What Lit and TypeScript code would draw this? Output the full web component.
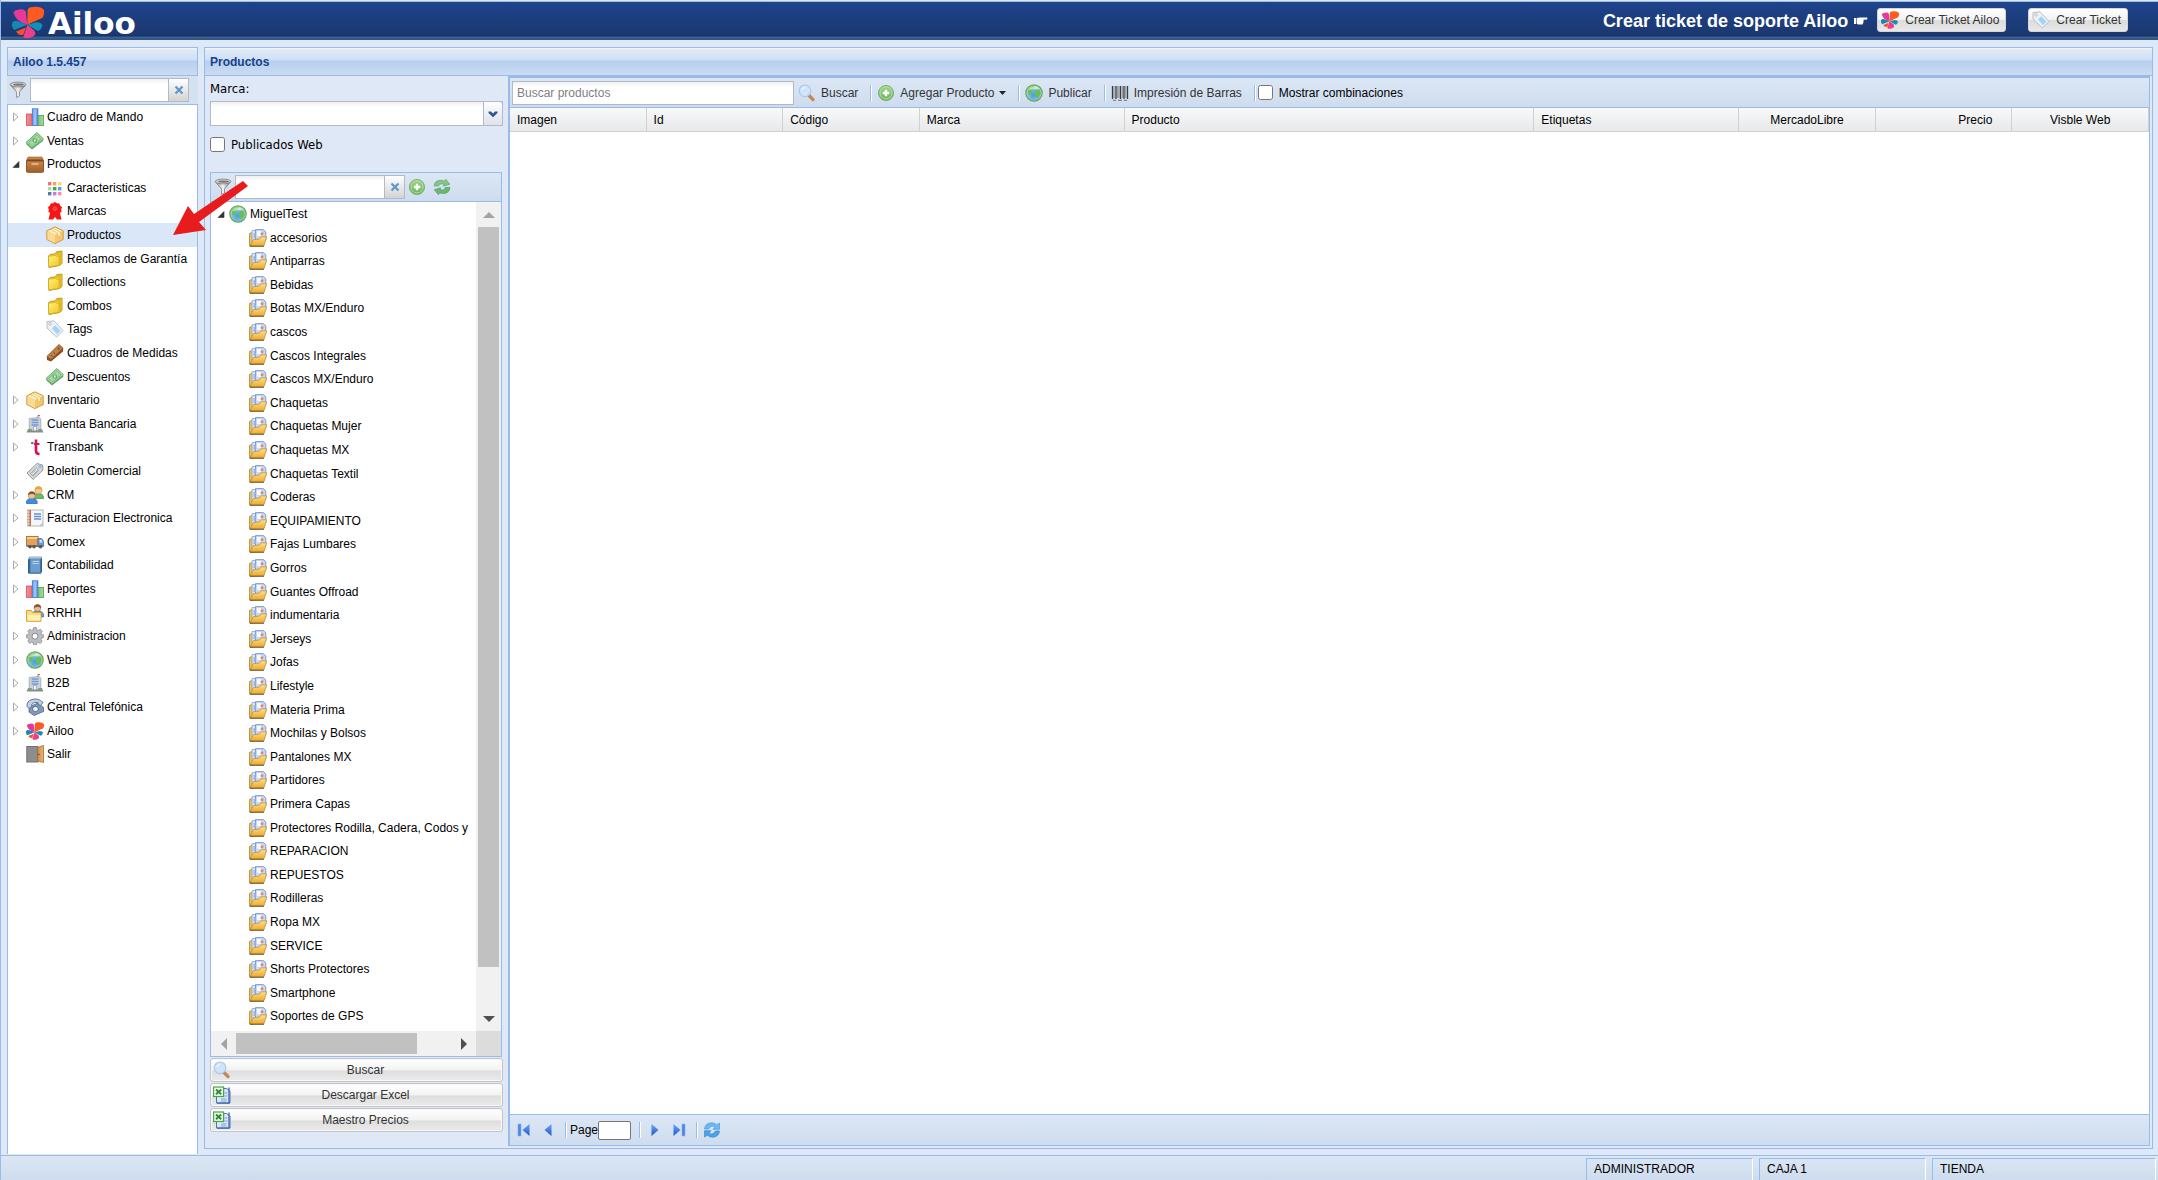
import { LitElement, html, svg, css, nothing } from "lit";
import { customElement, state } from "lit/decorators.js";
import { classMap } from "lit/directives/class-map.js";

const pinwheel = svg`
  <path d="M8.600 10.200Q2 8.500.8 3.200 2 1.500 4.300 1.700 6.500 1 7.800 2.800Z" fill="#e8389a"/>
  <path d="M8.600 10.200 8.800 2Q9 .4 12 .3 15.700-.4 18 1.900 18.400 4 17.200 6.300Z" fill="#ff5a1f"/>
  <path d="M8.600 10.200 13.700 8.900Q16.500 9 17 10.500 16.800 13 14.500 13.800Z" fill="#1390b8"/>
  <path d="M8.600 10.200 12.300 13.300Q13.800 15 12.500 16.500 9.800 18.600 6.300 17.300Z" fill="#ee3d8b"/>
  <path d="M7.800 11.800 6.300 16Q3.500 16.500 2.300 14Z" fill="#fb4f2a"/>
  <path d="M8.600 10.200 1.200 13.200Q-.6 11 .2 9 1 7.800 2.600 8Z" fill="#1587b5"/>`;

const bars = svg`
  <rect x=".4" y="6" width="5.700" height="11.500" fill="url(#gRedBar)" stroke="#dd5257" stroke-width=".8"/>
  <rect x="6.300" y=".8" width="5.600" height="16.700" fill="url(#gBlueBar)" stroke="#3d76d2" stroke-width=".8"/>
  <rect x="12.100" y="7.500" width="5.500" height="10" fill="url(#gGreenBar)" stroke="#4fa055" stroke-width=".8"/>`;

const money = svg`
  <path d="M0 12 11 2 17.500 8.500 6 17.500Z" fill="#5ea268"/>
  <path d="M0 10.500 11 .5 17.500 7 6 16Z" fill="#a9d8a4" stroke="#64ab69"/>
  <path d="M2.500 10.500 11 2.800 15 7 6.200 14Z" fill="none" stroke="#7dbb7e"/>
  <circle cx="8.800" cy="8.500" r="2.300" fill="#5fae66"/><path d="M8 8.500h1.600M8.800 7v3" stroke="#dff3da"/>`;

const box = svg`
  <path d="M.8 4.800 9 .8 17.200 4.800V13.500L9 17.600.8 13.500Z" fill="#f5c768" stroke="#d39a3b"/>
  <path d="M1.500 5.200 9 9 16.500 5.200 9 1.500Z" fill="#fdecb9"/>
  <path d="M9 9V17L1.500 13.300V5.300Z" fill="#f9db95"/>
  <path d="M4.800 3.600 12 7.300V11L14.300 9.900V6.200L7 2.500Z" fill="#fff7dc" stroke="#dcae58" stroke-width=".6"/>`;

const building = svg`
  <path d="M3.200 16.500V3.500L13 2.500 14.800 4V16.500Z" fill="#cfd3d8" stroke="#a0a5ab" stroke-width=".8"/>
  <path d="M5.500 5h7M5.500 7.500h7M5.500 10h7" stroke="#6d9cda" stroke-width="1.300"/>
  <path d="M11.700 2.500V.5" stroke="#888" stroke-width=".7"/><path d="M12 0h1.700v1.300H12z" fill="#d33"/>
  <path d="M7.500 11.500h3v5h-3z" fill="#f2f6fa" stroke="#778" stroke-width=".5"/>
  <path d="M1.300 15.500h15.400l.6 2H.7z" fill="#868c93"/><path d="M1.800 14h4v2h-4zM12.200 14h4v2h-4z" fill="#79a276"/>`;

const globe = svg`
  <circle cx="9" cy="9" r="8.200" fill="url(#gGlobe)" stroke="#6aa65f" stroke-width="1.200"/>
  <path d="M3.500 5Q6 1.800 9.500 2.500L8.500 5 6.500 7 7 9.500 4.500 11Q2.200 9 3.500 5ZM10.500 6.500 14.500 5.500Q16.500 9 14.500 12L12 14.500 10.500 11.500 9 9.500ZM5.500 12.500 8 13.500 7.500 15.500Z" fill="#6cbd59"/>
  <path d="M3 6Q8 0 14.500 4.500Q8.500 5 3 6Z" fill="#fff" opacity=".55"/>`;

const tag = svg`
  <path d="M1 1.500 8 .8 17 10.500 10.500 17 1 8Z" fill="#eef1f4" stroke="#b9bfc6"/>
  <path d="M6 8.500 9.200 5.300 14.500 10.800 11 14.200Z" fill="#9fd5fb"/><circle cx="4" cy="3.800" r="1.300" fill="#fff" stroke="#b9bfc6"/>`;

const folderYellow = svg`
  <path d="M2.500 6 4 4.500 9.500 3.800 10.500 1.800 16 1V13.500L13.500 15.500 3 17.500Z" fill="#f5d33c" stroke="#b98f12" stroke-width=".9"/>
  <path d="M10.500 2.300 15.500 1.500V13L13.500 14.500V4.500L10 5Z" fill="#e3b81e"/>
  <path d="M2.500 6.300 9.500 5.300 10.500 6.300 13.200 5.900V15.300L2.800 17Z" fill="url(#gYellow)" stroke="#c99d14" stroke-width=".6"/>`;

const icons: Record<string, unknown> = {
  bars, money, box, building, globe, tag, pinwheel,
  folder: folderYellow,
  chest: svg`
    <path d="M2 2 16 2 18 6.500H0Z" fill="#c98548" stroke="#99602e" stroke-width=".6"/><path d="M1.200 4.500h15.600L18 7H0Z" fill="#6f421d"/>
    <rect x=".5" y="6" width="17" height="11.300" rx="1" fill="url(#gBrown)" stroke="#8d5323"/>
    <path d="M5.500 8.200h7v1.600h-7z" fill="#e8bd8c"/>`,
  dots: svg`
    <path d="M2 3h3.400v3.400H2z" fill="#fa6e6e"/><path d="M7 3h3.400v3.400H7z" fill="#f7a15e"/><path d="M12 3h3.400v3.400H12z" fill="#f5dc6a"/>
    <path d="M2 8h3.400v3.400H2z" fill="#a7dfa2"/><path d="M7 8h3.400v3.400H7z" fill="#33b04a"/><path d="M12 8h3.400v3.400H12z" fill="#4fa4e8"/>
    <path d="M2 13h3.400v3.400H2z" fill="#5676b8"/><path d="M7 13h3.400v3.400H7z" fill="#c47bdc"/><path d="M12 13h3.400v3.400H12z" fill="#f48bb0"/>`,
  ribbon: svg`
    <path d="M4.500 9 2.500 17.500H7L9 15 11 17.500H15.500L13.500 9Z" fill="#f01818"/>
    <path d="m9 0 2 1.300 2.400.1.800 2.300 1.800 1.600-.8 2.200.4 2.400-2.200 1.200L12 13.300 9 12.400 6 13.300 4.600 11.100 2.400 9.900l.4-2.400L2 5.300l1.800-1.600.8-2.300L7 1.300Z" fill="#fb1414"/>
    <circle cx="9" cy="6.800" r="3.200" fill="#ff3c3c" stroke="#c40f0f" stroke-width=".7"/>`,
  ruler: svg`
    <path d="M.8 13.500 13 .8 17.300 4.500 17 7.500 5 17.500 1 16Z" fill="#8a4f24"/>
    <path d="M.8 12.500 13 .5 17 4.200 5 15.500Z" fill="#bd8046" stroke="#8d5226" stroke-width=".8"/>
    <circle cx="12.800" cy="4.500" r="1" fill="#7d4317"/><path d="m5 11 1.500 1.500M7.500 8.500 9 10" stroke="#7d4317"/>`,
  transbank: svg`
    <path d="M10 1.500v11.500q0 3 3.500 3" fill="none" stroke="#dc1049" stroke-width="2.600"/><path d="M8 6H13.500" stroke="#dc1049" stroke-width="2"/>
    <circle cx="6.300" cy="5" r="1.300" fill="#2f7fc0"/>`,
  ticket: svg`
    <path d="M1 11 11 1.500 16.500 3 17 8 7 17.500Z" fill="#d5d7d9" stroke="#96999c"/>
    <path d="M4.500 11.500 10.500 6 12.500 8.200 7 14Z" fill="#eef0f1" stroke="#8d9093" stroke-width=".8"/>
    <path d="m6 11.500 4-3.700M7.200 12.700 11.500 8.500" stroke="#888b8e" stroke-width=".7"/><circle cx="14" cy="4.500" r="1.600" fill="#8dbce8"/>`,
  people: svg`
    <path d="M8 11Q8 7.500 12.500 7.500T17.500 11V12.500H8Z" fill="#6fb96d" stroke="#3e8a42" stroke-width=".7"/>
    <circle cx="12.500" cy="4.200" r="3.600" fill="#f3c893" stroke="#c98f4f" stroke-width=".6"/><path d="M8.800 4Q9 .4 12.500.4T16.200 4Q12 1.800 8.800 4Z" fill="#e2ab39"/>
    <path d="M.5 16Q.5 12.500 5.800 12.500T11.200 16V17.500H.5Z" fill="#3f8de0" stroke="#2264b4" stroke-width=".7"/>
    <circle cx="5.800" cy="9.200" r="3.600" fill="#f1c193" stroke="#b67c44" stroke-width=".6"/><path d="M2 9.200Q2.200 5.400 5.800 5.400T9.600 9.200Q6 7 2 9.200Z" fill="#8b5328"/>`,
  notebook: svg`
    <rect x="1.500" y="1" width="15.500" height="16" fill="#f6f7f8" stroke="#b5b8bb"/>
    <path d="M2.500 1H5v16H2.500z" fill="#c7724c"/><path d="M1 3h3M1 6h3M1 9h3M1 12h3M1 15h3" stroke="#f0d8cc"/>
    <path d="M8 5h7M8 7.500h7M8 10h7" stroke="#5d94d8" stroke-width="1.300"/><path d="m13 17 4-4v4Z" fill="#c3c6c9"/>`,
  truck: svg`
    <rect x=".5" y="3.500" width="11.500" height="9" fill="#e2a25b" stroke="#b57636"/><path d="M1 4h10.500v2H1z" fill="#f4cd9b"/>
    <path d="M12 5.500h3.500Q17.500 7 17.500 9.500v3.500H12Z" fill="#6f97d3" stroke="#456ba8" stroke-width=".8"/><path d="M13.500 6.800h2l1 2.700h-3z" fill="#d7e7fa"/>
    <path d="M.5 12.500h17V14H.5z" fill="#70757b"/><circle cx="4" cy="13.700" r="1.800" fill="#555"/><circle cx="8" cy="13.700" r="1.800" fill="#555"/><circle cx="14.500" cy="13.700" r="1.800" fill="#555"/>`,
  book: svg`
    <path d="M2 3.500 3.500.8H16V15.500L14.500 17.500H2Z" fill="#2f5f8e"/><rect x="3.800" y="2.600" width="11" height="14.400" fill="#6d9dcb" stroke="#376a9c"/>
    <path d="M6.500 5.500h6.500M6.500 7.500h6.500" stroke="#b8d4ec"/><path d="M2.500 3.500 4 1.300h11.500v1.200H4Z" fill="#dfe9f2"/>`,
  rrhh: svg`
    <path d="M6.500 10Q7 6.500 11.500 6.500T17.500 10V13H6.500Z" fill="#5c9de2" stroke="#3473ba" stroke-width=".7"/>
    <circle cx="11.500" cy="4" r="3.300" fill="#efbd8e" stroke="#a76b3c" stroke-width=".6"/><path d="M7.900 4Q8 .3 11.500.3T15.200 4Q12 2 7.900 4Z" fill="#8f572b"/>
    <path d="M.6 6.500H5.500L6.500 8.500H15V17.300H.6Z" fill="#f9dd7c" stroke="#d79e35"/><path d="M1.500 11H14.500V16.500H1.500Z" fill="#fdf0b3"/>`,
  gear: svg`
    <path d="m7.600.6h2.800l.4 2.200 1.600.7L14.300 2.300l1.900 2-1.200 1.800.6 1.500 2 .4v2.600l-2 .5-.7 1.600 1.200 1.800-2 1.900-1.800-1.200-1.500.6-.4 2H7.600l-.5-2-1.600-.6-1.700 1.200-2-2 1.200-1.700-.7-1.600-1.900-.5V7.900l1.900-.3.800-1.700L1.900 4.200l1.900-2 1.800 1.200 1.600-.6Z" fill="#bcbfc2" stroke="#8b8e91" stroke-width=".8"/>
    <circle cx="9" cy="9.200" r="3" fill="#fff" stroke="#85888b"/>`,
  phone: svg`
    <path d="M3 9 12 5 17.500 9.500V13.500L8 17.500 3 14Z" fill="#8299b8" stroke="#4e6686" stroke-width=".8"/>
    <path d="M1 8.500Q.5 3 6 1.500 12-.5 17 4.500L14.500 7.500 12 6.200 12 4.500Q8 3.500 5.500 6.500L6 8.500 3 10.500Z" fill="#c2d0e1" stroke="#516a8b" stroke-width=".9"/>
    <ellipse cx="9.500" cy="11" rx="3" ry="2.600" fill="#f0f4f9" stroke="#47617f" stroke-width=".9"/>`,
  door: svg`
    <rect x=".8" y="1.500" width="11" height="15.500" fill="#8b8d90" stroke="#6e7073"/><path d="M11.500 2.500 17.500.5V17.500L11.500 16Z" fill="url(#gDoor)" stroke="#a8682d" stroke-width=".8"/>
    <circle cx="12.800" cy="9.500" r=".8" fill="#6b3c12"/>`,
  funnel: svg`
    <path d="M1.500 4 7.500 11V16.500L10.500 15V11L16.500 4Z" fill="url(#gGrey)" stroke="#666" stroke-width=".6"/>
    <ellipse cx="9" cy="3.500" rx="7.800" ry="2.400" fill="#d6d6d6" stroke="#6c6c6c" stroke-width=".7"/><ellipse cx="9.500" cy="3.600" rx="5.500" ry="1.200" fill="#777"/>`,
  category: svg`
    <path d="M.5 4.500 2.500 3.500 4 5V17H.5Z" fill="#efc152" stroke="#a47724" stroke-width=".7"/>
    <path d="M3 1.500H9V13H3Z" fill="#dbe6f8" stroke="#8fa5cf" stroke-width=".8"/>
    <path d="M6.500.6H14.500L16.800 3V11H6.500Z" fill="#c7d8f5" stroke="#6c8ac2" stroke-width=".8"/>
    <path d="M8 2h4v5H8z" fill="#f4f8ff"/><path d="M4.500 4h2v5h-2z" fill="#9fb9e6"/><circle cx="13" cy="4.800" r="1.500" fill="#e58760"/>
    <path d="M.8 17 4.500 10.500 10.500 10 12 7.800H17.700L15 16.700Z" fill="url(#gYellow2)" stroke="#a87822" stroke-width=".6"/><path d="M1 17.300H15" stroke="#5d4a24" stroke-width=".9"/>`,
  search: svg`
    <path d="m10.500 11 4.500 4.500" stroke="#c18b55" stroke-width="3.400" stroke-linecap="round"/>
    <circle cx="7" cy="6.800" r="5.800" fill="#cfe4fa" stroke="#a9c8ea" stroke-width="1.200"/><path d="M3.500 6.500Q4 3 8 3 5.500 4 3.500 6.500Z" fill="#fff"/>`,
  add: svg`
    <circle cx="9" cy="9" r="7.600" fill="url(#gAdd)" stroke="#6dab5d" stroke-width=".8"/><circle cx="9" cy="9" r="6" fill="none" stroke="#b4dea6"/>
    <path d="M9 5.700v6.600M5.700 9h6.600" stroke="#fff" stroke-width="2.400"/>`,
  swap: svg`
    <path d="M1 8Q1.500 2 8.500 2.300L11.500 3 13 1.300 16.800 6.300 10.500 8.200 10.800 6.300Q7 5 5.500 8Z" fill="#85c489" stroke="#58a45f" stroke-width=".6"/>
    <path d="M17 9.500Q16.500 15.700 9.500 15.500L6.500 14.800 5.500 16.800 1.200 11.700 7.500 9.800 7.200 11.700Q11 13 12.500 9.500Z" fill="#6db673" stroke="#4b9653" stroke-width=".6"/>`,
  excel: svg`
    <path d="M7 2.500H13.500L17 5V17H3.500V10H7Z" fill="#dbe7f8" stroke="#4a74b4"/><path d="M16 1.500V17.200H4" fill="none" stroke="#3d69ad" stroke-width="1.300"/>
    <path d="M8 13h5.500M8 15h5.500M11.500 7h3M11.500 10h3" stroke="#7fa3d6"/>
    <rect x=".6" y="1" width="10" height="9.500" fill="#eef8ea" stroke="#4ba34d" stroke-width="1.200"/><path d="M3 3.500 8.200 8.200M8.200 3.500 3 8.200" stroke="#2c8b31" stroke-width="1.900"/>`,
  barcode: svg`<path d="M1.500 2V15M5 2V15M9.500 2V15M13 2V15M16.500 2V15" stroke="#3c3c3c" stroke-width="1.300"/><path d="M3 2V14M6.700 2V14M8 2V14M11.300 2V14M14.800 2V14" stroke="#777" stroke-width=".8"/><path d="M2 16.300h3M7 16.300h4M13 16.300h3" stroke="#555" stroke-width=".8"/>`,
  first: svg`<path d="M3 3h3v12H3z" fill="#4b86e2" stroke="#8ab2ee" stroke-width=".6"/><path d="M14.500 3V15L7.500 9Z" fill="url(#gBlue)"/>`,
  prev: svg`<path d="M12.500 3V15L5.500 9Z" fill="url(#gBlue)"/>`,
  next: svg`<path d="M5.500 3V15L12.500 9Z" fill="url(#gBlue)"/>`,
  last: svg`<path d="M12 3h3v12h-3z" fill="#4b86e2" stroke="#8ab2ee" stroke-width=".6"/><path d="M3.500 3V15L10.500 9Z" fill="url(#gBlue)"/>`,
  refresh: svg`
    <path d="M1.500 8Q2 2 8.500 1.800 12 1.800 13.500 3.800L16.500 2V8.300H10L12 6Q8 3.500 5.500 8Z" fill="#6cb8f3" stroke="#3f93d8" stroke-width=".6"/>
    <path d="M16.500 10Q16 16 9.500 16.200 6 16.200 4.500 14.200L1.500 16V9.700H8L6 12Q10 14.500 12.500 10Z" fill="#4ba2e8" stroke="#2f84cb" stroke-width=".6"/>`,
};

const icon = (name: string) =>
  html`<svg class="icon" viewBox="0 0 18 18" aria-hidden="true">${icons[name]}</svg>`;

type Item = { icon: string; label: string; kind?: "closed" | "open" | "leaf" | "child" };

const menu: Item[] = [
  { icon: "bars", label: "Cuadro de Mando" },
  { icon: "money", label: "Ventas" },
  { icon: "chest", label: "Productos", kind: "open" },
  { icon: "dots", label: "Caracteristicas", kind: "child" },
  { icon: "ribbon", label: "Marcas", kind: "child" },
  { icon: "box", label: "Productos", kind: "child" },
  { icon: "folder", label: "Reclamos de Garantía", kind: "child" },
  { icon: "folder", label: "Collections", kind: "child" },
  { icon: "folder", label: "Combos", kind: "child" },
  { icon: "tag", label: "Tags", kind: "child" },
  { icon: "ruler", label: "Cuadros de Medidas", kind: "child" },
  { icon: "money", label: "Descuentos", kind: "child" },
  { icon: "box", label: "Inventario" },
  { icon: "building", label: "Cuenta Bancaria" },
  { icon: "transbank", label: "Transbank" },
  { icon: "ticket", label: "Boletin Comercial", kind: "leaf" },
  { icon: "people", label: "CRM" },
  { icon: "notebook", label: "Facturacion Electronica" },
  { icon: "truck", label: "Comex" },
  { icon: "book", label: "Contabilidad" },
  { icon: "bars", label: "Reportes" },
  { icon: "rrhh", label: "RRHH", kind: "leaf" },
  { icon: "gear", label: "Administracion" },
  { icon: "globe", label: "Web" },
  { icon: "building", label: "B2B" },
  { icon: "phone", label: "Central Telefónica" },
  { icon: "pinwheel", label: "Ailoo" },
  { icon: "door", label: "Salir", kind: "leaf" },
];

const categories = [
  "accesorios", "Antiparras", "Bebidas", "Botas MX/Enduro", "cascos", "Cascos Integrales",
  "Cascos MX/Enduro", "Chaquetas", "Chaquetas Mujer", "Chaquetas MX", "Chaquetas Textil",
  "Coderas", "EQUIPAMIENTO", "Fajas Lumbares", "Gorros", "Guantes Offroad", "indumentaria",
  "Jerseys", "Jofas", "Lifestyle", "Materia Prima", "Mochilas y Bolsos", "Pantalones MX",
  "Partidores", "Primera Capas", "Protectores Rodilla, Cadera, Codos y", "REPARACION",
  "REPUESTOS", "Rodilleras", "Ropa MX", "SERVICE", "Shorts Protectores", "Smartphone",
  "Soportes de GPS",
];

const columns: { label: string; span: number; align?: "center" | "right" }[] = [
  { label: "Imagen", span: 2 },
  { label: "Id", span: 2 },
  { label: "Código", span: 2 },
  { label: "Marca", span: 3 },
  { label: "Producto", span: 6 },
  { label: "Etiquetas", span: 3 },
  { label: "MercadoLibre", span: 2, align: "center" },
  { label: "Precio", span: 2, align: "right" },
  { label: "Visble Web", span: 2, align: "center" },
];
const totalSpan = columns.reduce((sum, c) => sum + c.span, 0);

@customElement("app-root")
export class AppRoot extends LitElement {
  @state() private selected = 5;

  static styles = css`
    :host {
      display: block;
      --line: #99bbe8;
      --bar: linear-gradient(#dce7f5, #cddcee);
      font: 12px/16px "Liberation Sans", Arial, sans-serif;
      color: #000;
    }
    * { box-sizing: border-box; }
    button, input, select { font: inherit; color: inherit; margin: 0; }
    button { background: none; border: 0; padding: 0; cursor: pointer; }
    a { color: inherit; text-decoration: none; }
    .defs { position: absolute; width: 0; height: 0; }
    .icon { display: block; width: 18px; height: 18px; flex: none; }
    .app {
      min-height: 100vh;
      display: flex;
      flex-direction: column;
      background: #dfe8f6;
      border-left: 1px solid var(--line);
      padding-top: 1px;
    }
    .top {
      height: 39px;
      flex: none;
      display: flex;
      align-items: flex-start;
      border-top: 1px solid var(--line);
      background: linear-gradient(#1e448c, #1b376f 33px, #16305f 34px, #3d6496 35px, #2c5384);
      padding: 0 30px 0 11px;
      color: #fff;
    }
    .brand { display: flex; align-items: center; gap: 4px; padding-top: 2px; flex: 1; }
    .brand .icon { width: 32px; height: 33px; }
    .word { font: bold 31px/34px "DejaVu Sans", sans-serif; padding-top: 2px; }
    .support { display: flex; align-items: center; gap: 6px; font-size: 18px; font-weight: bold; line-height: 38px; margin-right: 9px; }
    .hand { width: 14px; height: 8px; display: block; }
    .ticket {
      display: flex;
      align-items: center;
      gap: 6px;
      height: 24px;
      margin-top: 6px;
      padding: 0 6px 0 3px;
      border: 1px solid #d5d5d5;
      border-radius: 3px;
      background: linear-gradient(#fff, #f2f2f2 48%, #dcdcdc 52%, #e8e8e8);
      color: #333;
    }
    .ticket + .ticket { margin-left: 22px; }
    .body { flex: 1; display: flex; gap: 6px; padding: 7px 5px 1px 6px; }
    .title {
      margin: 0;
      height: 29px;
      padding: 1px 5px 0;
      border: 1px solid var(--line);
      background: linear-gradient(#f4f8fd, #dfeaf7 2px, #cfdff4 12px, #b6cfef 13px, #cbdcf3);
      color: #15428b;
      font-size: 12px;
      font-weight: bold;
      line-height: 27px;
    }
    .side { width: 191px; flex: none; display: flex; flex-direction: column; }
    .filter { display: flex; align-items: center; background: #d3e1f1; }
    .side .filter { height: 28px; padding: 0 0 0 2px; }
    .filter .icon { margin-right: 3px; }
    .field {
      height: 24px;
      min-width: 0;
      padding: 0 4px;
      border: 1px solid #b5b8c8;
      border-radius: 0;
      background: linear-gradient(#f0f0f0, #fff 5px);
      outline: 0;
    }
    .field::placeholder { color: #808080; opacity: 1; }
    .side .field { width: 139px; }
    .clear {
      width: 20px;
      height: 24px;
      display: grid;
      place-items: center;
      border: 1px solid #b5b8c8;
      border-left: 0;
      background: linear-gradient(#fff, #e9e9e9 50%, #d3d3d3);
    }
    .clear svg { width: 10px; height: 10px; display: block; }
    .tree { list-style: none; margin: 0; padding: 0; background: #fff; }
    .side .tree { flex: 1; border: 1px solid var(--line); border-bottom: 0; }
    .row { height: 24px; display: flex; align-items: center; }
    .row:nth-child(5n + 2), .row:nth-child(5n + 4) { height: 23px; }
    .side .row { padding-left: 4px; }
    .row.on { background: #d9e7f8; }
    .twist { width: 14px; height: 16px; display: grid; place-items: center start; }
    .twist svg { width: 8px; height: 10px; display: block; }
    .node { display: flex; align-items: center; gap: 3px; white-space: nowrap; }
    .side .child { padding-left: 38px; }
    .main { flex: 1; min-width: 0; display: flex; flex-direction: column; margin-bottom: 5px; }
    .work { flex: 1; display: flex; border: 1px solid var(--line); border-top: 0; }
    .form { width: 303px; flex: none; display: flex; flex-direction: column; padding: 0 5px 16px; }
    .tahoma { font-family: "DejaVu Sans Condensed", "Noto Sans", sans-serif; font-size: 13px; }
    .label { line-height: 25px; }
    .combo { display: grid; height: 25px; }
    .combo > * { grid-area: 1 / 1; }
    .combo select { appearance: none; width: 100%; height: 25px; }
    .arrow {
      justify-self: end;
      width: 20px;
      display: grid;
      place-items: center;
      pointer-events: none;
      border: 1px solid #b5b8c8;
      background: linear-gradient(#fff, #eceff4 50%, #dfe3ea);
      border-radius: 0 3px 0 0;
    }
    .arrow svg { width: 10px; height: 8px; }
    .check { display: flex; align-items: center; }
    .check input { flex: none; width: 15px; height: 15px; margin: 0 6px 0 0; }
    .pub { height: 46px; padding-bottom: 9px; }
    .cats { margin-right: 1px; flex: 1; display: flex; flex-direction: column; border: 1px solid var(--line); }
    .cats .filter { height: 29px; padding-left: 3px; border-bottom: 1px solid var(--line); background: var(--bar); }
    .cats .field { width: 150px; }
    .tool { width: 18px; height: 18px; margin-left: 3px; }
    .tool + .tool { margin-left: 7px; }
    .pane { flex: 1; display: grid; grid-template: 1fr 25px / 1fr 25px; }
    .pane .tree { overflow: hidden; min-width: 0; }
    .pane .row { padding-left: 6px; }
    .pane .twist { width: 12px; }
    .pane .child { padding-left: 38px; }
    .vbar, .hbar { display: flex; align-items: center; background: #f1f1f1; }
    .vbar { flex-direction: column; }
    .vbar button, .hbar button { width: 25px; height: 25px; flex: none; display: grid; place-items: center; }
    .vbar svg, .hbar svg { width: 12px; height: 12px; display: block; }
    .track { flex: 1; }
    .vbar .track { width: 21px; display: flex; flex-direction: column; }
    .hbar .track { height: 21px; display: flex; }
    .thumb { background: #c1c1c1; }
    .vbar .thumb { flex: 0 0 95%; }
    .hbar .thumb { flex: 0 0 84%; }
    .corner { background: #dcdcdc; }
    .actions { display: grid; gap: 1px; padding-top: 1px; }
    .wide {
      height: 24px;
      display: grid;
      grid-template-columns: 18px 1fr;
      align-items: center;
      padding: 0 2px;
      border: 1px solid #c4c4c4;
      border-radius: 3px;
      background: linear-gradient(#fff, #f3f3f3 50%, #dedede 54%, #ebebeb);
      box-shadow: inset 0 0 0 1px #f8f8f8;
      color: #333;
    }
    .grid {
      flex: 1;
      min-width: 0;
      display: flex;
      flex-direction: column;
      margin: 0 2px 2px 0;
      border: 1px solid var(--line);
      border-top-width: 2px;
      border-left-width: 2px;
      background: #fff;
    }
    .bar { display: flex; align-items: center; height: 30px; background: var(--bar); color: #333; }
    .bar.tools { border-bottom: 1px solid var(--line); padding-left: 2px; }
    .tools .field { width: 282px; height: 24px; margin-right: 4px; }
    .act { display: flex; align-items: center; gap: 5px; height: 22px; padding: 0 12px 0 0; }
    .act svg.caret { width: 7px; height: 4px; }
    .sep { width: 2px; height: 16px; border-left: 1px solid var(--line); background: #fff; flex: none; margin-right: 5px; }
    .tools .check { color: #000; margin-left: -3px; }
    table { width: 100%; border-collapse: separate; border-spacing: 0; table-layout: fixed; }
    th {
      height: 24px;
      padding: 0 7px;
      border-right: 1px solid #d0d0d0;
      border-bottom: 1px solid #d0d0d0;
      background: linear-gradient(#f9f9f9, #e6e8ea);
      font-weight: normal;
      text-align: left;
      line-height: 22px;
    }
    th.center { text-align: center; }
    th.right { text-align: right; padding-right: 19px; }
    .empty { flex: 1; }
    .paging { height: 31px; border-top: 1px solid var(--line); padding-left: 5px; color: #000; }
    .paging button + button { margin-left: 6px; }
    .paging .sep { margin: 0 3px 0 12px; }
    .paging button + .sep { margin-left: 8px; }
    .paging input { width: 33px; height: 19px; border: 1px solid #767676; border-radius: 2px; background: #fff; padding: 0 3px; }
    .paging label { display: flex; align-items: center; }
    .paging .gap { margin: 0 5px 0 8px; }
    .status {
      height: 25px;
      flex: none;
      display: flex;
      justify-content: flex-end;
      gap: 6px;
      padding: 2px 2px 0 0;
      border-top: 1px solid var(--line);
      background: var(--bar);
    }
    .cell { width: 167px; padding-left: 7px; line-height: 20px; border: 1px solid var(--line); border-bottom: 0; border-right-color: #fff; }
    .cell.last { width: 224px; }
    .pointer { position: absolute; left: 170px; top: 178px; width: 80px; height: 60px; pointer-events: none; }
  `;

  private xButton() {
    return html`<button class="clear" aria-label="Limpiar"><svg viewBox="0 0 10 10"><path d="m1.500 1.500 7 7M8.500 1.500l-7 7" stroke="#6295cc" stroke-width="2.200"/></svg></button>`;
  }

  private twist(open: boolean) {
    return html`<button class="twist" aria-label=${open ? "Contraer" : "Expandir"}>
      <svg viewBox="0 0 8 10">${open
        ? svg`<path d="M7 2.500V8.500H1Z" fill="#333" stroke="#333" stroke-width=".6"/>`
        : svg`<path d="M1.500 1V9L6 5Z" fill="#fff" stroke="#aaa"/>`}</svg>
    </button>`;
  }

  private menuRow(item: Item, index: number) {
    const kind = item.kind ?? "closed";
    return html`<li class=${classMap({ row: true, child: kind === "child", on: index === this.selected })}>
      ${kind === "closed" || kind === "open" ? this.twist(kind === "open") : nothing}
      ${kind === "leaf" ? html`<span class="twist"></span>` : nothing}
      <a class="node" href="#" @click=${(e: Event) => { e.preventDefault(); this.selected = index; }}>${icon(item.icon)}<span>${item.label}</span></a>
    </li>`;
  }

  private scrollArrow(label: string, d: string, color: string) {
    return html`<button aria-label=${label}><svg viewBox="0 0 12 12"><path d=${d} fill=${color}/></svg></button>`;
  }

  render() {
    return html`
      <svg class="defs" aria-hidden="true"><defs>
        <radialGradient id="gGlobe" cx=".5" cy=".6"><stop offset="0" stop-color="#3f9be8"/><stop offset=".7" stop-color="#7fc0e6"/><stop offset="1" stop-color="#b2dca0"/></radialGradient>
        <linearGradient id="gRedBar"><stop stop-color="#f58c8c"/><stop offset="1" stop-color="#e8747a"/></linearGradient>
        <linearGradient id="gBlueBar"><stop stop-color="#5c98ee"/><stop offset=".5" stop-color="#a9cbfa"/><stop offset="1" stop-color="#4a84e0"/></linearGradient>
        <linearGradient id="gGreenBar"><stop stop-color="#7cc47d"/><stop offset="1" stop-color="#a5dba0"/></linearGradient>
        <linearGradient id="gYellow" x2="1" y2="1"><stop stop-color="#fff27a"/><stop offset="1" stop-color="#f0c522"/></linearGradient>
        <linearGradient id="gYellow2" x2="0" y2="1"><stop stop-color="#ffe08a"/><stop offset="1" stop-color="#eda92a"/></linearGradient>
        <linearGradient id="gBrown" x2="0" y2="1"><stop stop-color="#cb8547"/><stop offset="1" stop-color="#a05f2a"/></linearGradient>
        <linearGradient id="gDoor"><stop stop-color="#c98b4a"/><stop offset="1" stop-color="#e5b77c"/></linearGradient>
        <linearGradient id="gGrey"><stop stop-color="#888"/><stop offset=".5" stop-color="#f4f4f4"/><stop offset="1" stop-color="#777"/></linearGradient>
        <linearGradient id="gAdd" x2="0" y2="1"><stop stop-color="#a3d691"/><stop offset="1" stop-color="#66b155"/></linearGradient>
        <linearGradient id="gBlue" x2="0" y2="1"><stop stop-color="#6fa4f2"/><stop offset="1" stop-color="#1d57cf"/></linearGradient>
      </defs></svg>
      <div class="app">
        <header class="top">
          <div class="brand">${icon("pinwheel")}<span class="word">Ailoo</span></div>
          <span class="support">Crear ticket de soporte Ailoo
            <svg class="hand" viewBox="0 0 14 8" aria-hidden="true"><path d="M0 1H2V7H0ZM2.600 1 6 .4 13 .6Q14 1.300 13 2.600L9.500 2.800V5.200L8.500 7.500H4L2.600 6.500Z" fill="#fff"/></svg>
          </span>
          <button class="ticket">${icon("pinwheel")}<span>Crear Ticket Ailoo</span></button>
          <button class="ticket">${icon("tag")}<span>Crear Ticket</span></button>
        </header>
        <div class="body">
          <nav class="side">
            <h2 class="title">Ailoo 1.5.457</h2>
            <div class="filter">${icon("funnel")}<input class="field" aria-label="Filtrar menú" />${this.xButton()}</div>
            <ul class="tree">${menu.map((m, i) => this.menuRow(m, i))}</ul>
          </nav>
          <main class="main">
            <h1 class="title">Productos</h1>
            <div class="work">
              <section class="form">
                <label class="label tahoma" for="marca">Marca:</label>
                <div class="combo">
                  <select id="marca" class="field"><option></option></select>
                  <span class="arrow"><svg viewBox="0 0 10 8"><path d="M.5 1.500H3L5 3.500 7 1.500H9.500V3L5 7.200.5 3Z" fill="#33568f"/></svg></span>
                </div>
                <label class="check pub tahoma"><input type="checkbox" /><span>Publicados Web</span></label>
                <div class="cats">
                  <div class="filter">
                    ${icon("funnel")}<input class="field" aria-label="Filtrar categorías" />${this.xButton()}
                    <button class="tool" aria-label="Agregar">${icon("add")}</button>
                    <button class="tool" aria-label="Actualizar">${icon("swap")}</button>
                  </div>
                  <div class="pane">
                    <ul class="tree">
                      <li class="row">${this.twist(true)}<a class="node" href="#">${icon("globe")}<span>MiguelTest</span></a></li>
                      ${categories.map((c) => html`<li class="row child"><a class="node" href="#">${icon("category")}<span>${c}</span></a></li>`)}
                    </ul>
                    <div class="vbar">
                      ${this.scrollArrow("Subir", "M0 9 6 3 12 9Z", "#a3a3a3")}
                      <div class="track"><div class="thumb"></div></div>
                      ${this.scrollArrow("Bajar", "M0 3 6 9 12 3Z", "#505050")}
                    </div>
                    <div class="hbar">
                      ${this.scrollArrow("Izquierda", "M9 0 3 6 9 12Z", "#a3a3a3")}
                      <div class="track"><div class="thumb"></div></div>
                      ${this.scrollArrow("Derecha", "M3 0 9 6 3 12Z", "#505050")}
                    </div>
                    <div class="corner"></div>
                  </div>
                </div>
                <div class="actions">
                  <button class="wide">${icon("search")}<span>Buscar</span></button>
                  <button class="wide">${icon("excel")}<span>Descargar Excel</span></button>
                  <button class="wide">${icon("excel")}<span>Maestro Precios</span></button>
                </div>
              </section>
              <section class="grid">
                <div class="bar tools">
                  <input class="field" placeholder="Buscar productos" aria-label="Buscar productos" />
                  <button class="act">${icon("search")}<span>Buscar</span></button><span class="sep"></span>
                  <button class="act">${icon("add")}<span>Agregar Producto</span><svg class="caret" viewBox="0 0 7 4"><path d="M0 0H7L3.500 4Z" fill="#222"/></svg></button><span class="sep"></span>
                  <button class="act">${icon("globe")}<span>Publicar</span></button><span class="sep"></span>
                  <button class="act">${icon("barcode")}<span>Impresión de Barras</span></button><span class="sep"></span>
                  <label class="check"><input type="checkbox" /><span>Mostrar combinaciones</span></label>
                </div>
                <table>
                  <colgroup>${columns.map((c) => html`<col style="width:${(c.span / totalSpan) * 100}%" />`)}</colgroup>
                  <thead><tr>${columns.map((c) => html`<th scope="col" class=${c.align ?? ""}>${c.label}</th>`)}</tr></thead>
                </table>
                <div class="empty"></div>
                <div class="bar paging">
                  <button aria-label="Primera página">${icon("first")}</button><button aria-label="Página anterior">${icon("prev")}</button>
                  <span class="sep"></span><label>Page<input aria-label="Page" /></label><span class="sep gap"></span>
                  <button aria-label="Página siguiente">${icon("next")}</button><button aria-label="Última página">${icon("last")}</button>
                  <span class="sep gap"></span><button aria-label="Actualizar">${icon("refresh")}</button>
                </div>
              </section>
            </div>
          </main>
        </div>
        <footer class="status">
          <div class="cell">ADMINISTRADOR</div><div class="cell">CAJA 1</div><div class="cell last">TIENDA</div>
        </footer>
      </div>
      <svg class="pointer" viewBox="0 0 80 60" aria-hidden="true"><path d="M3 57 18 28 24 36 73 3 78 8 29 44 36 52Z" fill="#e81c1c"/></svg>
    `;
  }
}
